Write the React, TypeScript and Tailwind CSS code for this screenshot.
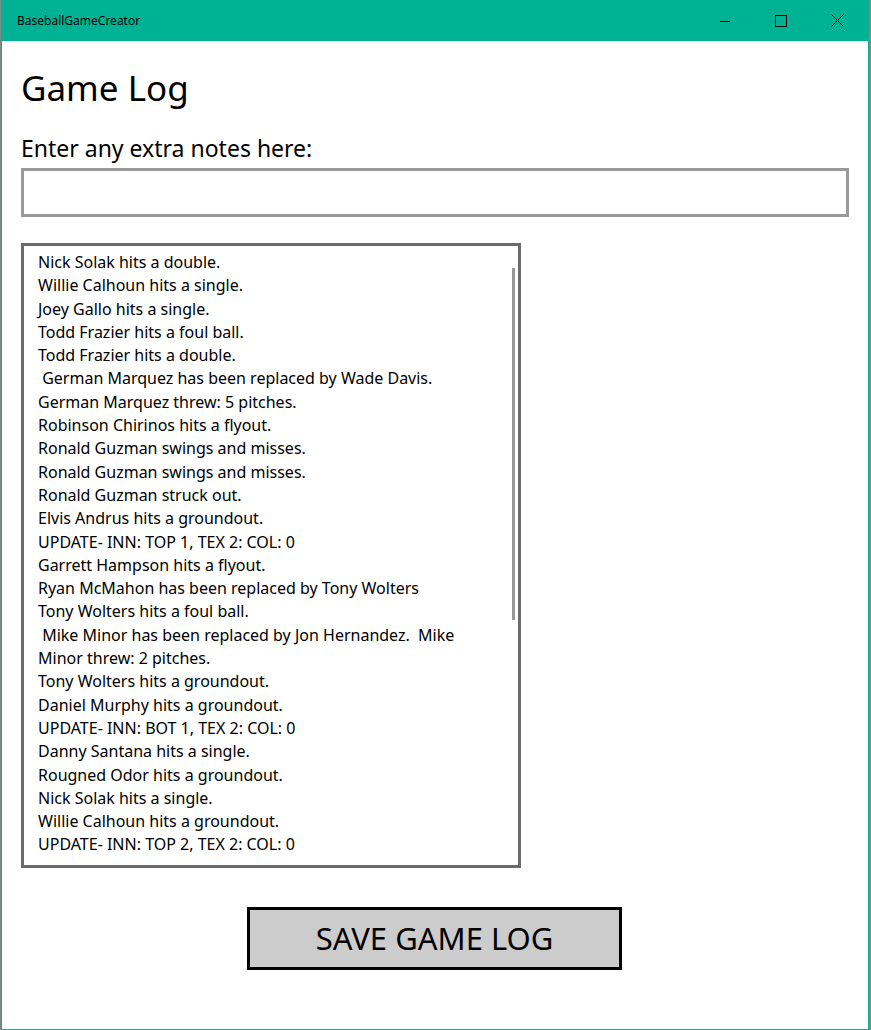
import React from "react";

const LOG_LINES = [
  "Nick Solak hits a double.",
  "Willie Calhoun hits a single.",
  "Joey Gallo hits a single.",
  "Todd Frazier hits a foul ball.",
  "Todd Frazier hits a double.",
  "\u00a0German Marquez has been replaced by Wade Davis.",
  "German Marquez threw: 5 pitches.",
  "Robinson Chirinos hits a flyout.",
  "Ronald Guzman swings and misses.",
  "Ronald Guzman swings and misses.",
  "Ronald Guzman struck out.",
  "Elvis Andrus hits a groundout.",
  "UPDATE- INN: TOP 1, TEX 2: COL: 0",
  "Garrett Hampson hits a flyout.",
  "Ryan McMahon has been replaced by Tony Wolters",
  "Tony Wolters hits a foul ball.",
  "\u00a0Mike Minor has been replaced by Jon Hernandez.\u00a0 Mike Minor threw: 2 pitches.",
  "Tony Wolters hits a groundout.",
  "Daniel Murphy hits a groundout.",
  "UPDATE- INN: BOT 1, TEX 2: COL: 0",
  "Danny Santana hits a single.",
  "Rougned Odor hits a groundout.",
  "Nick Solak hits a single.",
  "Willie Calhoun hits a groundout.",
  "UPDATE- INN: TOP 2, TEX 2: COL: 0",
];

const font = { fontFamily: '"Noto Sans", "Open Sans", sans-serif' };

function TitleBar() {
  return (
    <div className="flex h-[41px] items-center justify-between bg-[#00b294] pl-[15px]">
      <span className="text-[12px] text-black">BaseballGameCreator</span>
      <div className="flex h-full items-center">
        <div className="flex h-full w-[46px] items-center justify-center">
          <svg width="12" height="12" viewBox="0 0 12 12">
            <path d="M1 6.5h10" stroke="#000" strokeWidth="1" />
          </svg>
        </div>
        <div className="ml-[10px] flex h-full w-[46px] items-center justify-center">
          <svg width="12" height="12" viewBox="0 0 12 12">
            <rect x="0.5" y="0.5" width="11" height="11" fill="none" stroke="#000" strokeWidth="1" />
          </svg>
        </div>
        <div className="ml-[10px] mr-[8px] flex h-full w-[46px] items-center justify-center">
          <svg width="13" height="13" viewBox="0 0 13 13">
            <path d="M0.5 0.5l12 12M12.5 0.5l-12 12" stroke="#000" strokeWidth="1" />
          </svg>
        </div>
      </div>
    </div>
  );
}

export default function App() {
  return (
    <div className="h-[1030px] w-[871px] bg-[#7a8a86]" style={font}>
      <div className="ml-[1px] flex h-[1030px] w-[868px] flex-col border-x border-b border-[#00b294] bg-white">
        <TitleBar />
        <div className="flex flex-1 flex-col pl-[19px] pr-[20px]">
          <h1 className="mt-[25px] text-[35px] leading-[44px] text-black">Game Log</h1>
          <p className="mt-[23px] text-[23px] leading-[30px] text-black">Enter any extra notes here:</p>
          <input
            className="mt-[5px] h-[49px] w-[828px] border-[3px] border-[#999999] bg-white px-2 outline-none"
            type="text"
          />
          <div className="relative mt-[26px] h-[625px] w-[500px] border-[3px] border-[#6b6b6b] bg-white">
            <div className="w-[478px] pl-[14px] pt-[5px] text-[16px] leading-[23.3px] text-black">
              {LOG_LINES.map((line, i) => (
                <div key={i}>{line}</div>
              ))}
            </div>
            <div className="absolute right-[3px] top-[22px] h-[352px] w-[3px] bg-[#999999]" />
          </div>
          <div className="mt-[39px] flex justify-center">
            <button className="h-[63px] w-[375px] border-[3px] border-black bg-[#cccccc] text-[31px] text-black">
              SAVE GAME LOG
            </button>
          </div>
        </div>
      </div>
    </div>
  );
}
